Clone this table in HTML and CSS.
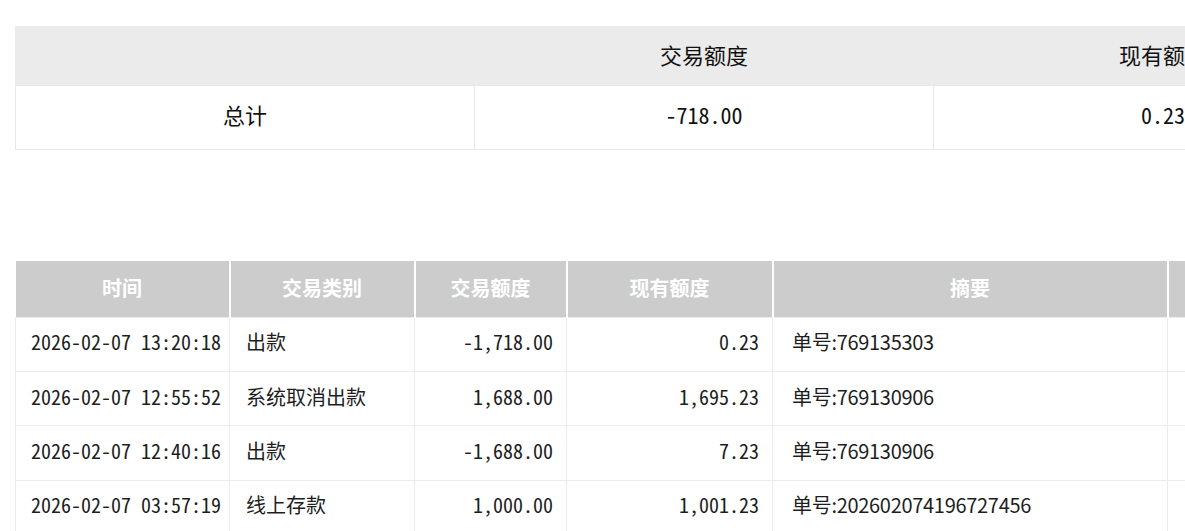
FILE: index.html
```html
<!DOCTYPE html>
<html lang="zh-CN">
<head>
<meta charset="utf-8">
<title>交易记录</title>
<link rel="stylesheet" href="styles.css">
</head>
<body>
<div class="page">
  <table class="summary">
    <colgroup>
      <col class="sc"><col class="sc"><col class="sc"><col class="sc">
    </colgroup>
    <thead>
      <tr><th></th><th>交易额度</th><th>现有额度</th><th></th></tr>
    </thead>
    <tbody>
      <tr><td>总计</td><td class="num">-718.00</td><td class="num">0.23</td><td></td></tr>
    </tbody>
  </table>

  <table class="records">
    <colgroup>
      <col class="c-time"><col class="c-type"><col class="c-amt"><col class="c-bal"><col class="c-memo"><col class="c-extra">
    </colgroup>
    <thead>
      <tr><th>时间</th><th>交易类别</th><th>交易额度</th><th>现有额度</th><th>摘要</th><th>备注</th></tr>
    </thead>
    <tbody>
      <tr>
        <td class="num time">2026-02-07 13:20:18</td>
        <td class="type">出款</td>
        <td class="num right">-1,718.00</td>
        <td class="num right">0.23</td>
        <td class="memo">单号:769135303</td>
        <td></td>
      </tr>
      <tr>
        <td class="num time">2026-02-07 12:55:52</td>
        <td class="type">系统取消出款</td>
        <td class="num right">1,688.00</td>
        <td class="num right">1,695.23</td>
        <td class="memo">单号:769130906</td>
        <td></td>
      </tr>
      <tr>
        <td class="num time">2026-02-07 12:40:16</td>
        <td class="type">出款</td>
        <td class="num right">-1,688.00</td>
        <td class="num right">7.23</td>
        <td class="memo">单号:769130906</td>
        <td></td>
      </tr>
      <tr>
        <td class="num time">2026-02-07 03:57:19</td>
        <td class="type">线上存款</td>
        <td class="num right">1,000.00</td>
        <td class="num right">1,001.23</td>
        <td class="memo">单号:20260207419672745<span>6</span></td>
        <td></td>
      </tr>
    </tbody>
  </table>
</div>
</body>
</html>
```

FILE: styles.css
```css
html, body {
  margin: 0;
  padding: 0;
  background: #ffffff;
}

body {
  font-family: "Noto Sans CJK SC", "Noto Sans", sans-serif;
  color: #1a1a1a;
}

.page {
  width: 1185px;
  height: 531px;
  overflow: hidden;
  padding: 26px 0 0 15px;
  box-sizing: border-box;
}

.num {
  font-feature-settings: "hwid" 1;
}

/* summary table */
.summary {
  border-collapse: collapse;
  table-layout: fixed;
  width: 1836px;
  font-size: 22px;
  color: #111;
}

.summary .sc {
  width: 459px;
}

.summary th {
  height: 59px;
  padding: 0 0 5px;
  box-sizing: border-box;
  background: #ebebeb;
  font-weight: 400;
  text-align: center;
  border: 1px solid #ebebeb;
  border-bottom: none;
}

.summary td {
  height: 64px;
  padding: 0 0 7px;
  box-sizing: border-box;
  text-align: center;
  border: 1px solid #e8e8e8;
}

/* records table */
.records {
  margin-top: 111px;
  border-collapse: collapse;
  table-layout: fixed;
  width: 1352px;
  font-size: 20px;
}

.records .c-time { width: 214px; }
.records .c-type { width: 185px; }
.records .c-amt { width: 152px; }
.records .c-bal { width: 206px; }
.records .c-memo { width: 395px; }
.records .c-extra { width: 200px; }

.records th {
  height: 56px;
  padding: 0 0 2px;
  box-sizing: border-box;
  background: #cccccc;
  color: #ffffff;
  font-weight: 700;
  text-align: center;
  border-left: 2px solid #ffffff;
}

.records th:first-child {
  border-left: none;
}

.records td {
  height: 54.4px;
  padding: 0 15px 5px;
  box-sizing: border-box;
  border: 1px solid #ececec;
  white-space: nowrap;
  color: #1e1e1e;
}

.records td.time {
  padding-left: 15px;
}

.records td.type {
  padding-left: 16px;
}

.records td.right {
  text-align: right;
  padding-right: 13px;
}

.records td.memo {
  padding-left: 19px;
  letter-spacing: -0.3px;
}
```
